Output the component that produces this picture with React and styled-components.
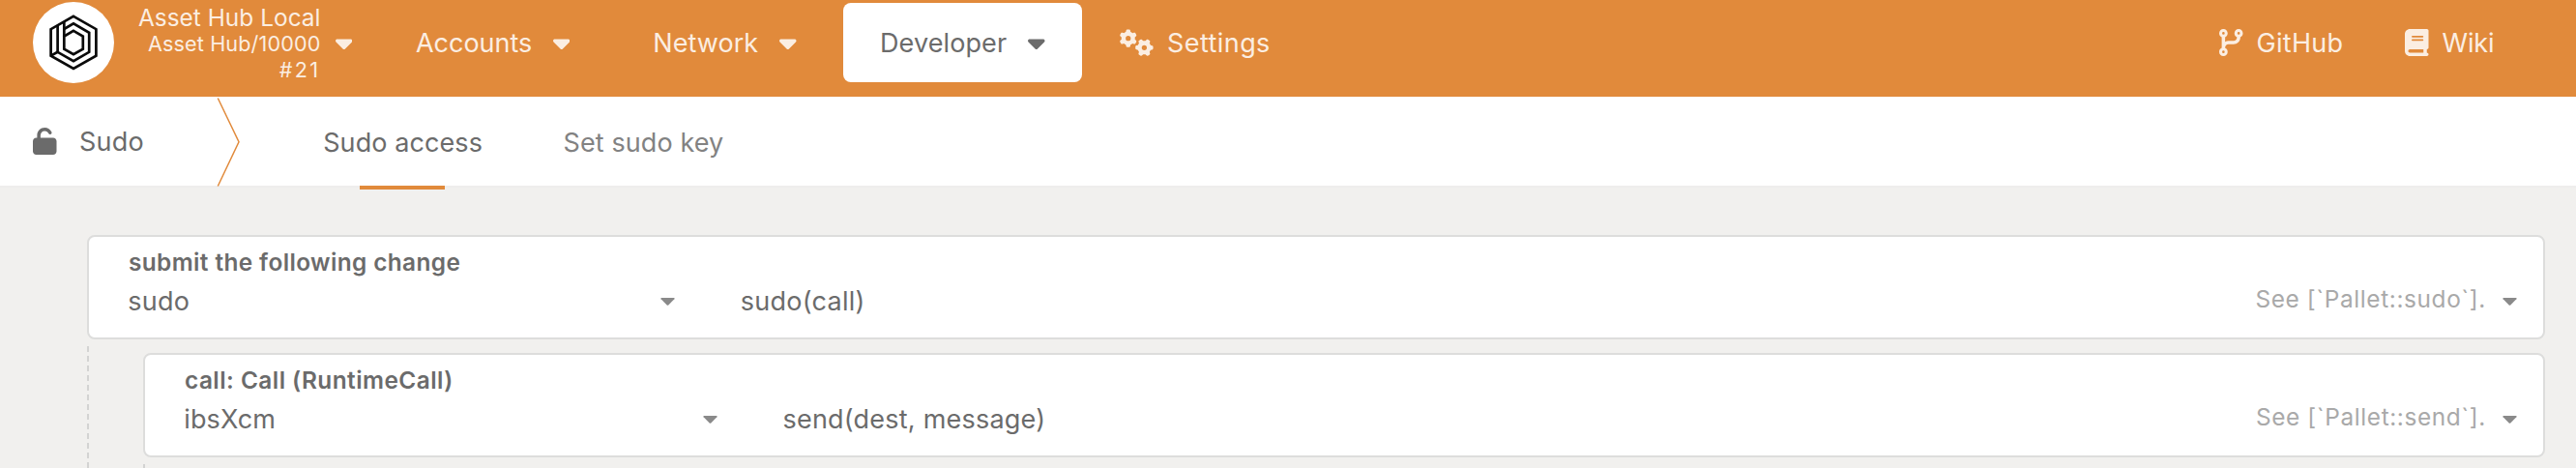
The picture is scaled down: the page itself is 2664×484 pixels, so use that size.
import React from 'react';
import styled, { createGlobalStyle } from 'styled-components';
import { FaBook, FaCaretDown, FaCodeBranch, FaGears, FaUnlock } from 'react-icons/fa6';

const GlobalStyle = createGlobalStyle`
  *, *::before, *::after { box-sizing: border-box; }
  html, body { margin: 0; background: #f1f0ee; overflow: hidden; }
  body { font-family: Inter, "Liberation Sans", sans-serif; font-size: 27px; color: #6b6b6b; }
`;

const Page = styled.div`
  display: flex;
  flex-direction: column;
  height: 484px;
  overflow: hidden;
`;

const Text = styled.span`
  white-space: nowrap;
  letter-spacing: ${(p) => p.$track || 0}px;
`;

const Icon = styled.span`
  display: flex;
  flex: none;

  svg {
    width: ${(p) => p.$width || 24.5}px;
    height: 28px;
  }
`;

const Header = styled.header`
  display: flex;
  flex: none;
  align-items: flex-start;
  height: 100px;
  padding: 3px 0 0 34px;
  background: #e18a3b;
  color: #fbeee2;
`;

const Brand = styled.div`
  display: flex;
  align-items: center;
  width: 330px;
  height: 82px;
  margin-right: 28px;
`;

const Logo = styled.svg`
  flex: none;
  width: 84px;
  height: 84px;
`;

const ChainInfo = styled.div`
  display: flex;
  flex: 1;
  flex-direction: column;
  align-items: flex-end;
  padding: 2px 15px 0 0;
  font-size: 21.6px;
  line-height: 27px;
`;

const ChainName = styled(Text)`
  font-size: 24.4px;
`;

const Nav = styled.nav`
  display: flex;
  gap: 10px;
`;

const NavItem = styled.div`
  display: flex;
  align-items: center;
  justify-content: space-between;
  width: ${(p) => p.$width}px;
  height: 82px;
  padding: 0 38px;
  border-radius: 8px;
  background: ${(p) => (p.$active ? '#fff' : 'transparent')};
  color: ${(p) => (p.$active ? '#6b6b6b' : 'inherit')};
`;

const IconLink = styled.div`
  display: flex;
  align-items: center;
  gap: 14px;
  width: ${(p) => (p.$width ? `${p.$width}px` : 'auto')};
  height: 82px;
  padding-left: ${(p) => p.$indent || 0}px;
`;

const ExternalLinks = styled.div`
  display: flex;
  margin-left: auto;
`;

const TabBar = styled.div`
  display: flex;
  flex: none;
  align-items: stretch;
  height: 94px;
  padding-left: 34px;
  border-bottom: 2px solid #eeedec;
  background: #fff;
`;

const Section = styled.div`
  display: flex;
  align-items: center;
  gap: 23.5px;
  width: 190px;
`;

const Divider = styled.svg`
  flex: none;
  width: 26px;
  height: 94px;
  margin-right: 84.2px;
`;

const Tab = styled.div`
  position: relative;
  display: flex;
  align-items: center;
  margin-right: 83.5px;
  padding-top: 2px;
  color: ${(p) => (p.$active ? '#6b6b6b' : '#828282')};
`;

const Underline = styled.span`
  position: absolute;
  bottom: -4px;
  left: calc(50% - 44.5px);
  width: 88px;
  height: 4px;
  background: #e18a3b;
`;

const Content = styled.main`
  flex: none;
  padding: 49px 32px 0 90px;
`;

const Card = styled.section`
  height: 108px;
  padding: 11px 27px 0 41px;
  border: 2px solid #dddddc;
  border-radius: 8px;
  background: #fff;
`;

const Label = styled.div`
  height: 30px;
  font-size: 24.4px;
  font-weight: 600;
  line-height: 30px;
`;

const Row = styled.div`
  display: flex;
  align-items: center;
  height: 50px;
  margin-left: -0.8px;
`;

const Select = styled.div`
  display: flex;
  align-items: center;
  justify-content: space-between;
  width: ${(p) => p.$width}px;
  margin-right: 68px;
`;

const Hint = styled(Text)`
  margin: -4px 17px 0 auto;
  color: #a9a9a9;
  font-size: 24.4px;
`;

const Triangle = styled.svg`
  flex: none;
  width: 15px;
  height: 8px;
  margin-top: 2px;
  fill: #8a8a8a;
`;

const Nested = styled.div`
  min-height: 140px;
  margin-top: 7px;
  padding: 7px 0 0 58px;
  background: repeating-linear-gradient(#d3d3d2 0 6px, transparent 6px 10px) left top / 2px 100% no-repeat;
`;

const DropMark = () => (
  <Triangle viewBox="0 0 15 8">
    <path d="M1 0h13q1 .3.4 1.2L8.3 7.5q-.8.7-1.6 0L.6 1.2Q0 .3 1 0z" />
  </Triangle>
);

const MenuCaret = () => (
  <Icon $width={17.5}>
    <FaCaretDown />
  </Icon>
);

function CallCard({ label, labelTrack, value, valueTrack, selectWidth, method, methodTrack, hint }) {
  return (
    <Card>
      <Label>
        <Text $track={labelTrack}>{label}</Text>
      </Label>
      <Row>
        <Select $width={selectWidth}>
          <Text $track={valueTrack}>{value}</Text>
          <DropMark />
        </Select>
        <Text $track={methodTrack}>{method}</Text>
        <Hint $track={0.61}>{hint}</Hint>
        <DropMark />
      </Row>
    </Card>
  );
}

export default function App() {
  return (
    <Page>
      <GlobalStyle />
      <Header>
        <Brand>
          <Logo viewBox="34 2 84 84">
            <circle cx="76" cy="44" r="42" fill="#fff" />
            <g fill="none" stroke="#0a0a0a" strokeWidth="2.7">
              <path d="M76 16.8 99.4 30.2V57.6L76 71 52.6 57.6V30.2Z" />
              <path d="M66.3 30 76 24.4 92.2 33.8V53.8L76 63.2 59.6 53.8V26.4" />
              <path d="M59.6 53.8 52.6 57.6M66.3 22.4V37.4" />
              <path d="M76 31.9 85.8 37.5V50.6L76 56.2 66.3 50.6V37.5Z" />
            </g>
          </Logo>
          <ChainInfo>
            <ChainName $track={0.03}>Asset Hub Local</ChainName>
            <Text $track={0.14}>Asset Hub/10000</Text>
            <Text $track={2.4}>#21</Text>
          </ChainInfo>
          <MenuCaret />
        </Brand>
        <Nav>
          <NavItem $width={235.3}>
            <Text $track={-0.02}>Accounts</Text>
            <MenuCaret />
          </NavItem>
          <NavItem $width={224.7}>
            <Text $track={0.05}>Network</Text>
            <MenuCaret />
          </NavItem>
          <NavItem $width={247} $active>
            <Text $track={0.11}>Developer</Text>
            <MenuCaret />
          </NavItem>
          <IconLink $indent={29}>
            <Icon $width={35}>
              <FaGears />
            </Icon>
            <Text $track={0.43}>Settings</Text>
          </IconLink>
        </Nav>
        <ExternalLinks>
          <IconLink $width={192}>
            <Icon>
              <FaCodeBranch />
            </Icon>
            <Text $track={0.29}>GitHub</Text>
          </IconLink>
          <IconLink $width={177}>
            <Icon>
              <FaBook />
            </Icon>
            <Text $track={-0.15}>Wiki</Text>
          </IconLink>
        </ExternalLinks>
      </Header>
      <TabBar>
        <Section>
          <Icon>
            <FaUnlock />
          </Icon>
          <Text $track={0.22}>Sudo</Text>
        </Section>
        <Divider viewBox="0 0 26 94">
          <path d="M1.3 1.5 23 46.7 1.3 92.5" fill="none" stroke="#e18a3b" strokeWidth="1.5" />
        </Divider>
        <Tab $active>
          <Text $track={0.09}>Sudo access</Text>
          <Underline />
        </Tab>
        <Tab>
          <Text $track={0.1}>Set sudo key</Text>
        </Tab>
      </TabBar>
      <Content>
        <CallCard
          label="submit the following change"
          labelTrack={0.39}
          value="sudo"
          valueTrack={0.25}
          selectWidth={565.6}
          method="sudo(call)"
          methodTrack={0.25}
          hint="See [`Pallet::sudo`]."
        />
        <Nested>
          <CallCard
            label="call: Call (RuntimeCall)"
            labelTrack={0.46}
            value="ibsXcm"
            valueTrack={0.14}
            selectWidth={551.3}
            method="send(dest, message)"
            methodTrack={0.22}
            hint="See [`Pallet::send`]."
          />
          <Nested />
        </Nested>
      </Content>
    </Page>
  );
}
